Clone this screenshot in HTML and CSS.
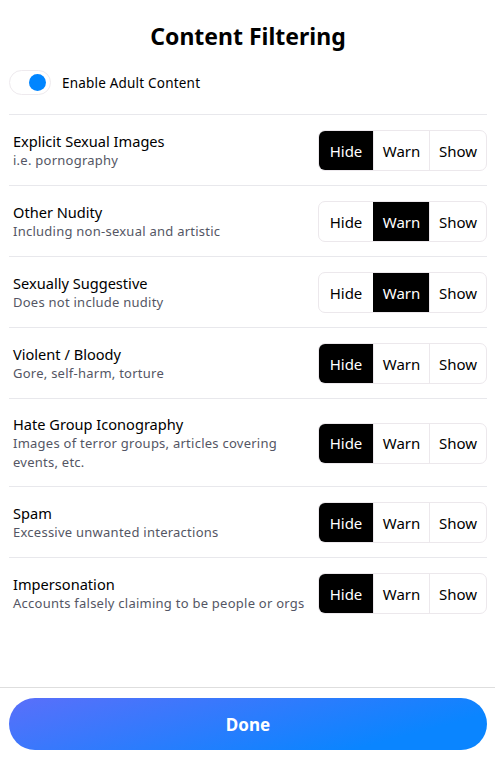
FILE: index.html
```html
<!DOCTYPE html>
<html lang="en">
<head>
    <meta charset="UTF-8">
    <meta name="viewport" content="width=device-width, initial-scale=1.0">
    <title>Content Filtering</title>
    <link rel="stylesheet" href="styles.css">
</head>
<body>
    <div class="modal">
        <div class="scroll">
            <h1 class="title">Content Filtering</h1>

            <div class="adult-toggle">
                <div class="switch"><div class="knob"></div></div>
                <span class="switch-label">Enable Adult Content</span>
            </div>

            <div class="row">
                <div class="info">
                    <div class="label">Explicit Sexual Images</div>
                    <div class="desc">i.e. pornography</div>
                </div>
                <div class="segmented">
                    <div class="seg active">Hide</div>
                    <div class="seg">Warn</div>
                    <div class="seg">Show</div>
                </div>
            </div>

            <div class="row">
                <div class="info">
                    <div class="label">Other Nudity</div>
                    <div class="desc">Including non-sexual and artistic</div>
                </div>
                <div class="segmented">
                    <div class="seg">Hide</div>
                    <div class="seg active">Warn</div>
                    <div class="seg">Show</div>
                </div>
            </div>

            <div class="row">
                <div class="info">
                    <div class="label">Sexually Suggestive</div>
                    <div class="desc">Does not include nudity</div>
                </div>
                <div class="segmented">
                    <div class="seg">Hide</div>
                    <div class="seg active">Warn</div>
                    <div class="seg">Show</div>
                </div>
            </div>

            <div class="row">
                <div class="info">
                    <div class="label">Violent / Bloody</div>
                    <div class="desc">Gore, self-harm, torture</div>
                </div>
                <div class="segmented">
                    <div class="seg active">Hide</div>
                    <div class="seg">Warn</div>
                    <div class="seg">Show</div>
                </div>
            </div>

            <div class="row">
                <div class="info">
                    <div class="label">Hate Group Iconography</div>
                    <div class="desc">Images of terror groups, articles covering events, etc.</div>
                </div>
                <div class="segmented">
                    <div class="seg active">Hide</div>
                    <div class="seg">Warn</div>
                    <div class="seg">Show</div>
                </div>
            </div>

            <div class="row">
                <div class="info">
                    <div class="label">Spam</div>
                    <div class="desc">Excessive unwanted interactions</div>
                </div>
                <div class="segmented">
                    <div class="seg active">Hide</div>
                    <div class="seg">Warn</div>
                    <div class="seg">Show</div>
                </div>
            </div>

            <div class="row last">
                <div class="info">
                    <div class="label">Impersonation</div>
                    <div class="desc">Accounts falsely claiming to be people or orgs</div>
                </div>
                <div class="segmented">
                    <div class="seg active">Hide</div>
                    <div class="seg">Warn</div>
                    <div class="seg">Show</div>
                </div>
            </div>
        </div>

        <div class="footer">
            <button class="done-btn">Done</button>
        </div>
    </div>
</body>
</html>
```

FILE: styles.css
```css
* {
    box-sizing: border-box;
}
body {
    margin: 0;
    background: #fff;
    font-family: "Noto Sans", "Open Sans", sans-serif;
    color: #000;
}
.modal {
    display: flex;
    flex-direction: column;
    height: 100vh;
}
.scroll {
    flex: 1;
    padding: 0 8px 0 9px;
}
.title {
    margin: 0;
    padding-top: 21px;
    text-align: center;
    font-size: 23px;
    line-height: 30px;
    font-weight: 700;
}
.adult-toggle {
    display: flex;
    align-items: center;
    gap: 11px;
    margin-top: 19px;
    padding-bottom: 19px;
    border-bottom: 1px solid #e8e8ec;
}
.switch {
    width: 42px;
    height: 25px;
    border: 1px solid #eeeaee;
    border-radius: 13px;
    display: flex;
    align-items: center;
    justify-content: flex-end;
    padding-right: 4px;
}
.knob {
    width: 17px;
    height: 17px;
    border-radius: 50%;
    background: #0085ff;
}
.switch-label {
    font-size: 13.5px;
    letter-spacing: 0.2px;
}
.row {
    display: flex;
    align-items: center;
    gap: 12px;
    padding: 15px 0 14px 4px;
    border-bottom: 1px solid #e8e8ec;
}
.row.last {
    border-bottom: none;
}
.info {
    flex: 1;
}
.label {
    font-size: 14.6px;
    line-height: 20px;
}
.desc {
    font-size: 13px;
    line-height: 19px;
    color: #545664;
    letter-spacing: 0.25px;
}
.segmented {
    display: flex;
    height: 41px;
    border: 1px solid #ece8ec;
    border-radius: 7px;
    overflow: hidden;
}
.seg {
    display: flex;
    align-items: center;
    justify-content: center;
    font-size: 15px;
    border-left: 1px solid #ece8ec;
}
.seg:nth-child(1) {
    width: 54px;
    border-left: none;
}
.seg:nth-child(2) {
    width: 56px;
}
.seg:nth-child(3) {
    width: 57px;
}
.seg.active {
    background: #000;
    color: #fff;
    border-left-color: #000;
}
.footer {
    border-top: 1px solid #dedede;
    padding: 10px 8px 26px 9px;
}
.done-btn {
    display: block;
    width: 100%;
    height: 52px;
    border: none;
    border-radius: 26px;
    background: linear-gradient(165deg, #5a6ffa, #0a85ff 80%);
    color: #fff;
    font-family: inherit;
    font-size: 17px;
    font-weight: 700;
}
```
